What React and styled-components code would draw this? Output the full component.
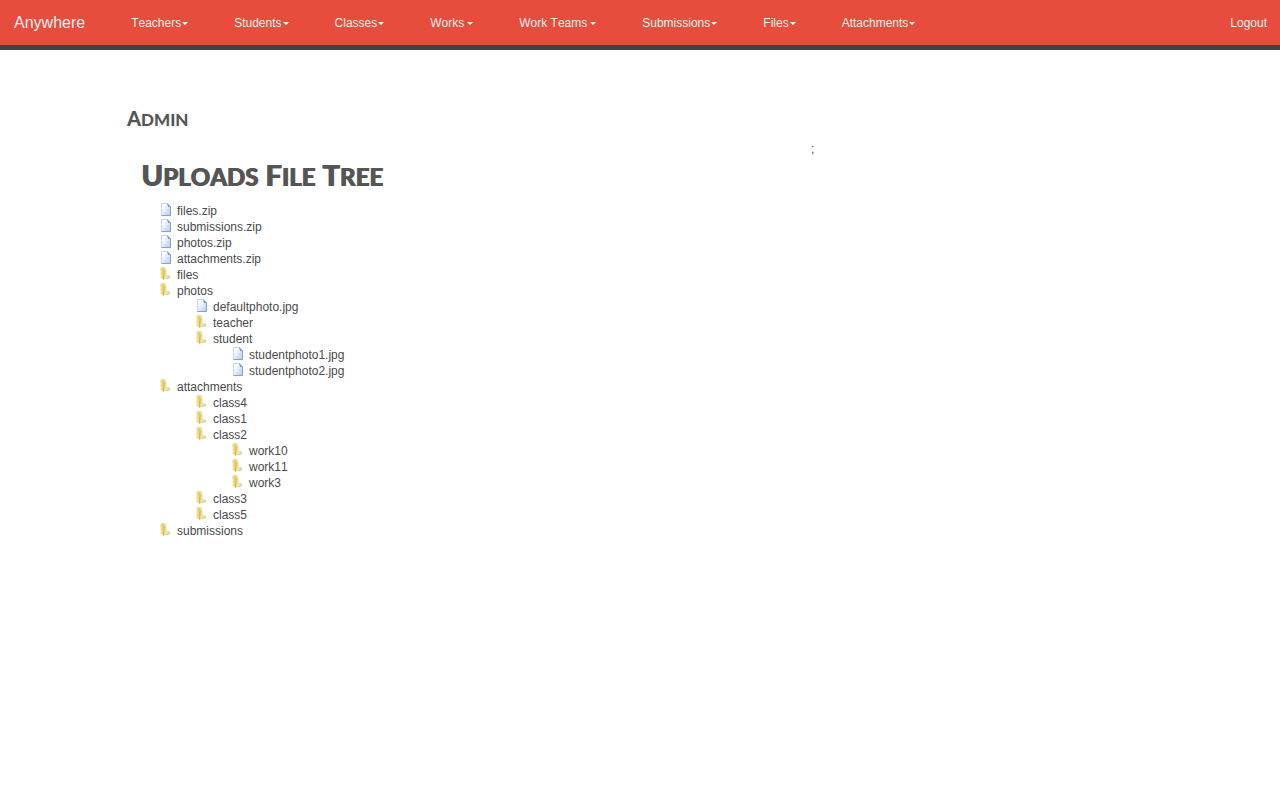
import React from "react";
import styled, { createGlobalStyle } from "styled-components";

const GlobalStyle = createGlobalStyle`
  * { box-sizing: border-box; }
  body {
    margin: 0;
    background: #fff;
    color: #4a4a4a;
    font: 12px/16px "Liberation Sans", Arial, sans-serif;
    font-kerning: none;
  }
`;

const Header = styled.header`
  display: flex;
  align-items: center;
  height: 50px;
  padding: 0 13px 0 14px;
  background: #e74c3c;
  border-bottom: 5px solid #444;
`;

const Brand = styled.a`
  margin-right: 46px;
  color: #ecf0f1;
  font-size: 16px;
  line-height: 20px;
  text-decoration: none;
`;

const Menu = styled.nav`
  display: flex;
  flex: 1;
  gap: 46px;
`;

const MenuButton = styled.button`
  display: flex;
  align-items: center;
  gap: ${(p) => (p.$spaced ? 3 : 1)}px;
  padding: 0;
  border: 0;
  background: none;
  color: #ecf0f1;
  font: inherit;
  font-kerning: none;
  white-space: nowrap;
  cursor: pointer;

  &::after {
    content: "";
    margin-top: 1px;
    border: 3px solid transparent;
    border-top-color: #fff;
    border-bottom: 0;
  }
`;

const LogoutLink = styled.a`
  color: #ecf0f1;
  text-decoration: none;
`;

const Main = styled.main`
  padding: 55px 127px 40px;
`;

const Heading = styled.h2`
  display: flex;
  gap: ${(p) => (p.$large ? 7 : 5)}px;
  margin: 0;
  color: #555;
  font-family: Lato, sans-serif;
  font-size: ${(p) => (p.$large ? 24 : 17)}px;
  font-weight: 900;
  line-height: ${(p) => (p.$large ? 40 : 26)}px;
  text-shadow: ${(p) => (p.$large ? "1px 0 #555" : "none")};
  text-transform: uppercase;
`;

const Word = styled.span`
  display: block;
  &::first-letter { font-size: ${(p) => (p.$large ? 29 : 20)}px; }
`;

const Columns = styled.div`
  display: grid;
  grid-template-columns: 66% 1fr;
  padding: 8px 0 0 14px;
`;

const Panel = styled.section`
  padding-top: 14px;
`;

const Aside = styled.aside`
  padding-left: 2px;
`;

const List = styled.ul`
  margin: 0;
  padding: 0 0 0 ${(p) => (p.$nested ? 36 : 18)}px;
  list-style: none;
`;

const RootList = styled.div`
  padding-top: 6px;
`;

const Entry = styled.div`
  display: flex;
  gap: 5px;
  height: 16px;
`;

const Icon = styled.svg`
  flex: none;
  width: 13px;
  height: 14px;
`;

function FileIcon() {
  return (
    <Icon viewBox="0 0 13 14" aria-hidden="true">
      <defs>
        <linearGradient id="paper" x1="0" y1="0" x2="1" y2="1">
          <stop offset="0.2" stopColor="#fff" />
          <stop offset="1" stopColor="#a9cdf5" />
        </linearGradient>
      </defs>
      <path d="M2.5 0.5H8.5L11.5 3.5V12.5H2.5Z" fill="url(#paper)" stroke="#c8d6ed" />
      <path d="M11.5 4V12.5H2.5" fill="none" stroke="#8b9fc8" />
      <path d="M8 0L12 4H9Z" fill="#6f9bc5" />
    </Icon>
  );
}

function FolderIcon() {
  return (
    <Icon viewBox="0 0 13 14" aria-hidden="true">
      <defs>
        <linearGradient id="folder" x1="0" y1="0" x2="1" y2="0">
          <stop offset="0" stopColor="#fdf0b0" />
          <stop offset="1" stopColor="#dcc25c" />
        </linearGradient>
      </defs>
      <path d="M6 9.5L10 8L11.5 10L10.5 11.5L5.5 12.5Z" fill="#d3cfbb" />
      <path d="M2 0H6.5L7.5 2V8.5L10 9.5L9 11L5 12Z" fill="#f1e09a" />
      <path d="M1 0.5L4 1.5L5 4V13L1.5 11Z" fill="url(#folder)" />
      <path d="M4 1.5L5.5 4L4.5 12.5" fill="none" stroke="#d0b454" strokeWidth="0.8" />
    </Icon>
  );
}

const menus = [
  ["Teachers"], ["Students"], ["Classes"], ["Works", true],
  ["Work Teams", true], ["Submissions"], ["Files"], ["Attachments"],
];

const file = (name) => ({ name, file: true });
const folder = (name, children = []) => ({ name, children });

const tree = [
  file("files.zip"),
  file("submissions.zip"),
  file("photos.zip"),
  file("attachments.zip"),
  folder("files"),
  folder("photos", [
    file("defaultphoto.jpg"),
    folder("teacher"),
    folder("student", [file("studentphoto1.jpg"), file("studentphoto2.jpg")]),
  ]),
  folder("attachments", [
    folder("class4"),
    folder("class1"),
    folder("class2", [folder("work10"), folder("work11"), folder("work3")]),
    folder("class3"),
    folder("class5"),
  ]),
  folder("submissions"),
];

function Tree({ items, nested }) {
  return (
    <List $nested={nested}>
      {items.map((item) => (
        <li key={item.name}>
          <Entry>
            {item.file ? <FileIcon /> : <FolderIcon />}
            <span>{item.name}</span>
          </Entry>
          {item.children?.length > 0 && <Tree items={item.children} nested />}
        </li>
      ))}
    </List>
  );
}

function Title({ text, large, as }) {
  return (
    <Heading as={as} $large={large}>
      {text.split(" ").map((word) => (
        <Word key={word} $large={large}>{word}</Word>
      ))}
    </Heading>
  );
}

export default function App() {
  return (
    <>
      <GlobalStyle />
      <Header>
        <Brand href="#">Anywhere</Brand>
        <Menu>
          {menus.map(([label, spaced]) => (
            <MenuButton key={label} type="button" $spaced={spaced}>{label}</MenuButton>
          ))}
        </Menu>
        <LogoutLink href="#">Logout</LogoutLink>
      </Header>
      <Main>
        <Title text="Admin" />
        <Columns>
          <Panel>
            <Title as="h1" text="Uploads File Tree" large />
            <RootList><Tree items={tree} /></RootList>
          </Panel>
          <Aside>;</Aside>
        </Columns>
      </Main>
    </>
  );
}
